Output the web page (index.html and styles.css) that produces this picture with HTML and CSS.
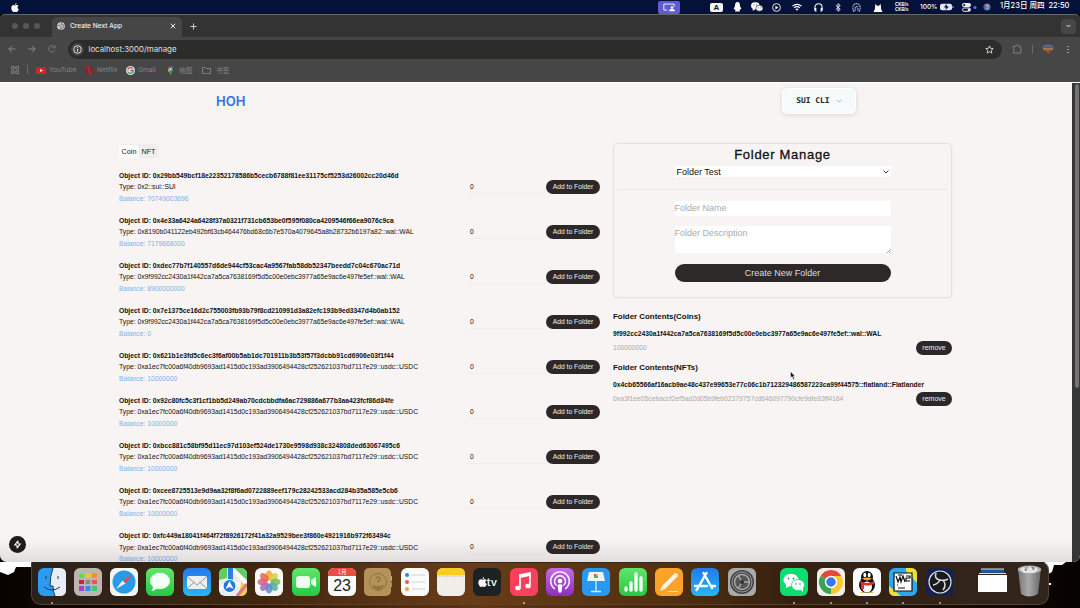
FILE: index.html
```html
<!DOCTYPE html>
<html lang="zh">
<head>
<meta charset="utf-8">
<title>Create Next App</title>
<link rel="stylesheet" href="styles.css">
</head>
<body>
<div class="desktop">
<header class="menubar">
  <svg class="apple" viewBox="0 0 16 18"><path fill="#fff" d="M11 0c0 2-1 4-3 4 0-2 1-3.500 3-4zM8 5c1 0 2-1 4-1 1 0 2.500.7 3 1.700-3 1.800-2.500 5.500.6 6.800C14.500 15.500 13 18 11.300 18c-1 0-1.600-.7-3-.7s-2 .7-3 .7C3 18 .5 13.500.5 10 .5 6 3 4 5 4c1.300 0 2 1 3 1z"/></svg>
  <div class="menu-right">
    <span class="share"><svg viewBox="0 0 14 10" width="12" height="9"><path d="M5 8H1V1h12v3" fill="none" stroke="#fff"/><circle cx="10.500" cy="5" r="1.500" fill="#fff"/><path d="M7 9.500c0-4 7-4 7 0z" fill="#fff"/></svg></span>
    <span class="ime">A</span>
    <svg class="m3" viewBox="0 0 10 12" width="9" height="10"><path fill="#fff" d="M5 0C2.500 0 2 2 2 5 .5 7 0 9 1 9l.8-.5L2.500 10 2 11.500h6L7.500 10l.8-1.500.7.5c1 0 .5-2-1-4 0-3-.5-5-3-5z"/></svg>
    <svg class="m4" viewBox="0 0 14 11" width="12" height="10"><ellipse cx="5" cy="4" rx="5" ry="4" fill="#fff"/><path d="M2 7v3l3-2" fill="#fff"/><ellipse cx="9.800" cy="7" rx="4.200" ry="3.500" fill="#fff" stroke="#061139" stroke-width=".7"/><path fill="#061139" d="M3 2.500h1v1H3zm3 0h1v1H6zM8 6h1v1H8zm3 0h1v1h-1z"/></svg>
    <svg class="m5" viewBox="0 0 12 12" width="9" height="9"><circle cx="6" cy="6" r="5.200" fill="none" stroke="#fff" stroke-width="1.200"/><path fill="#fff" d="M4.500 3.500 8.500 6l-4 2.500z"/></svg>
    <svg class="m6" viewBox="0 0 12 9" width="10" height="8"><path d="M.5 3.500Q6-1 11.500 3.500M2.500 5.500Q6 2.500 9.500 5.500" fill="none" stroke="#fff" stroke-width="1.400"/><path d="m6 9-2-2q2-1.500 4 0z" fill="#fff"/></svg>
    <svg class="m7" viewBox="0 0 10 10" width="9" height="9"><path d="M1 7V5c0-5.500 8-5.500 8 0v2" fill="none" stroke="#fff" stroke-width="1.200"/><path fill="#fff" d="M.4 5.500h2.200V10L.4 8.500zm7 0h2.200v3L7.400 10z"/></svg>
    <svg class="m8" viewBox="0 0 8 12" width="6" height="9"><path d="m1 3 6 5.500L4 11V1l3 2.500L1 9" fill="none" stroke="#fff" stroke-width="1.200"/></svg>
    <svg class="m9" viewBox="0 0 10 10" width="9" height="9"><path d="M2 10 1 6c-1-7 9-7 8 0l-1 4M3.500 9V5.500c0-2 3-2 3 0V9" fill="none" stroke="#abb3cb" stroke-width="1.300" stroke-dasharray="2 .6"/></svg>
    <svg class="m10" viewBox="0 0 10 10" width="10" height="9"><path fill="#fff" d="M2 1 4 3h2l2-2 .5 6L10 10H0l1.500-3z"/></svg>
    <span class="rate">CKB/s<br>CKB/s</span>
    <span class="pct">100%</span>
    <span class="battery"><svg viewBox="0 0 14 8" width="14" height="8"><rect y=".8" width="12" height="6.400" rx="2" fill="#e3e7f0"/><path d="M13 3v2" stroke="#bbc"/><path d="M6.500 1 4 4.500h2L5.500 7 9 3.500H7z" fill="#061139"/></svg></span>
    <svg class="m11" viewBox="0 0 15 9" width="15" height="9"><rect width="9" height="4" rx="2" fill="#eee"/><rect x=".5" y="5" width="8" height="3.300" rx="1.600" fill="none" stroke="#eee"/><circle cx="2.200" cy="2" r="1.100" fill="#061139"/><circle cx="7" cy="6.700" r="1.300" fill="#eee"/><circle cx="13" cy="4.500" r="1.500" fill="#7468ee"/></svg>
    <span class="siri"></span>
    <span class="clock">1月23日 周四&nbsp; 22:50</span>
  </div>
</header>

<main class="window">
  <div class="tabs">
    <div class="lights"><i></i><i></i><i></i></div>
    <div class="tab">
      <svg viewBox="0 0 10 10" width="8" height="8"><circle cx="5" cy="5" r="4.800" fill="#d2d2d2"/><path d="M1 4l2.500.5L5 6v2.500L3.500 9M6 1 5 3l2 1 2-.5M7 6l1.500.5L7 8" fill="none" stroke="#555" stroke-width="1.200"/></svg>
      <span>Create Next App</span>
      <svg class="close" viewBox="0 0 8 8" width="6" height="6"><path d="m1 1 6 6M7 1 1 7" stroke="#eee" stroke-width="1.300"/></svg>
    </div>
    <svg class="plus" viewBox="0 0 8 8" width="7" height="7"><path d="M4 .5v7M.5 4h7" stroke="#ddd"/></svg>
    <span class="tabmenu"><svg viewBox="0 0 6 4" width="5" height="4"><path d="m.7.7 2.300 2.300L5.300.7" fill="none" stroke="#eee" stroke-width="1.200"/></svg></span>
  </div>
  <div class="toolbar">
    <svg class="nav" viewBox="0 0 10 10"><path d="M9.500 5H1m4-4L1 5l4 4" fill="none" stroke="#999"/></svg>
    <svg class="nav" viewBox="0 0 10 10"><path d="M.5 5H9M5 1l4 4-4 4" fill="none" stroke="#999"/></svg>
    <svg class="nav" viewBox="0 0 10 10"><path d="M8.500 6.500A4 4 0 1 1 8 2.300M8.800.5v3H5.500" fill="none" stroke="#888"/></svg>
    <div class="omnibox">
      <span class="info"><svg viewBox="0 0 10 10" width="9" height="9"><circle cx="5" cy="5" r="4.200" fill="none" stroke="#eee"/><path d="M5 4.300v3M5 2.400v1" stroke="#eee" stroke-width="1.100"/></svg></span>
      <span class="url">localhost:3000/manage</span>
      <svg class="star" viewBox="0 0 10 10" width="9" height="9"><path d="m5 1 1.200 2.700 2.900.3L7 6l.6 3L5 7.500 2.400 9 3 6 .9 4l2.900-.3z" fill="none" stroke="#eee" stroke-width=".9"/></svg>
    </div>
    <svg class="puzzle" viewBox="0 0 11 11" width="10" height="10"><path d="M1.500 2.500h2.800c-.3-2 2.700-2 2.400 0h2.800v2.800c1.500 0 1.500 2.400 0 2.400v2.300h-8V7.700c1.500 0 1.500-2.400 0-2.400z" fill="none" stroke="#858585"/></svg>
    <i class="bar"></i>
    <svg class="avatar" viewBox="0 0 12 10" width="12" height="10"><path d="M1 2q5-3 10 0v4l-2 1-1 2-3-1-4-2z" fill="#7e5047"/><path d="M1 3q5-3 10 0" stroke="#536c9a" stroke-width="2" fill="none"/><path d="M1 5h10" stroke="#c19a50"/><path d="m4 6 3 3" stroke="#b54432" stroke-width="2"/></svg>
    <i class="dots"></i>
  </div>
  <div class="bookmarks">
    <svg class="apps" viewBox="0 0 9 9" width="8" height="8"><path d="M.5.500h3v3h-3zM5.500.500h3v3h-3zM.5 5.500h3v3h-3zM5.500 5.500h3v3h-3z" fill="none" stroke="#888"/></svg>
    <i class="bar b1"></i>
    <span class="bm bm1"><svg viewBox="0 0 10 7" width="10" height="7"><rect width="10" height="7" rx="1.500" fill="#d9222d"/><path d="m4 2 3 1.500L4 5z" fill="#fff"/></svg>YouTube</span>
    <span class="bm bm2"><svg viewBox="0 0 7 9" width="7" height="9"><path d="M0 0h2v9H0zM4.500 0h2v9h-2z" fill="#8c2020"/><path d="M0 0h2.400l4.100 9H4z" fill="#ad2a2a"/></svg>Netflix</span>
    <span class="bm bm3"><svg viewBox="0 0 10 10" width="9" height="9"><circle cx="5" cy="5" r="5" fill="#ddd"/><path d="M7.300 2.800A3.200 3.200 0 0 0 2 4" fill="none" stroke="#d94e42" stroke-width="1.400"/><path d="M2 4q-.6 1.500.4 3" fill="none" stroke="#e1b532" stroke-width="1.400"/><path d="M2.400 7q2 2 4.200.6" fill="none" stroke="#459c56" stroke-width="1.400"/><path d="M6.600 7.600Q8 6.700 8 5H5" fill="none" stroke="#4378ce" stroke-width="1.400"/></svg>Gmail</span>
    <span class="bm bm4"><svg viewBox="0 0 8 10" width="7" height="9"><path d="M4 10C3 7 1 6 1 3.500L4 4l3-1c0 3-2 4-3 7z" fill="#36a455"/><path d="M1 3.500Q1 0 4 0v4z" fill="#d84c42"/><path d="M4 0q3 0 3 3.500L4 4z" fill="#4781d6"/><path d="m1 4 3-1-2 4z" fill="#e1b13c"/><circle cx="4" cy="3.500" r="1" fill="#fff"/></svg>地图</span>
    <span class="bm bm5"><svg viewBox="0 0 10 8" width="9" height="7"><path d="M.5.500h3l1 1.200h5v5.800h-9z" fill="none" stroke="#888"/></svg>书签</span>
  </div>

  <div class="viewport">
    <nav class="site-nav">
      <span class="brand">HOH</span>
      <button class="wallet">SUI CLI <svg viewBox="0 0 6 4" width="6" height="4"><path d="m.5.700 2.500 2.500L5.500.7" fill="none" stroke="#9aa" stroke-width=".8"/></svg></button>
    </nav>
    <div class="content">
      <section class="assets">
        <div class="switch"><span class="on">Coin</span><span>NFT</span></div>
        <div class="coin"><div class="desc"><b>Object ID: 0x29bb549bcf18e22352178586b5cecb6788f81ee31175cf5253d26002cc20d46d</b><p>Type: 0x2::sui::SUI</p><em>Balance: 70749003696</em></div><span class="amount">0</span><button>Add to Folder</button></div>
        <div class="coin"><div class="desc"><b>Object ID: 0x4e33a6424a6428f37a0321f731cb653be0f595f080ca4209546f66ea9076c9ca</b><p>Type: 0x8190b041122eb492bf63cb464476bd68c6b7e570a4079645a8b28732b6197a82::wal::WAL</p><em>Balance: 7179668000</em></div><span class="amount">0</span><button>Add to Folder</button></div>
        <div class="coin"><div class="desc"><b>Object ID: 0xdec77b7f140557d6de944cf53cac4a9567fab58db52347beedd7c04c670ac71d</b><p>Type: 0x9f992cc2430a1f442ca7a5ca7638169f5d5c00e0ebc3977a65e9ac6e497fe5ef::wal::WAL</p><em>Balance: 8900000000</em></div><span class="amount">0</span><button>Add to Folder</button></div>
        <div class="coin"><div class="desc"><b>Object ID: 0x7e1375ce16d2c755003fb93b79f8cd210991d3a82efc193b9ed3347d4b0ab152</b><p>Type: 0x9f992cc2430a1f442ca7a5ca7638169f5d5c00e0ebc3977a65e9ac6e497fe5ef::wal::WAL</p><em>Balance: 0</em></div><span class="amount">0</span><button>Add to Folder</button></div>
        <div class="coin"><div class="desc"><b>Object ID: 0x621b1e3fd5c6ec3f6af00b5ab1dc701911b3b53f57f3dcbb91cd6906e03f1f44</b><p>Type: 0xa1ec7fc00a6f40db9693ad1415d0c193ad3906494428cf252621037bd7117e29::usdc::USDC</p><em>Balance: 10000000</em></div><span class="amount">0</span><button>Add to Folder</button></div>
        <div class="coin"><div class="desc"><b>Object ID: 0x92c80fc5c3f1cf1bb5d249ab70cdcbbdfa6ac729886a677b3aa423fcf86d84fe</b><p>Type: 0xa1ec7fc00a6f40db9693ad1415d0c193ad3906494428cf252621037bd7117e29::usdc::USDC</p><em>Balance: 10000000</em></div><span class="amount">0</span><button>Add to Folder</button></div>
        <div class="coin"><div class="desc"><b>Object ID: 0xbcc881c58bf95d11ec97d103ef524de1730e9598d938c324808ded63067495c6</b><p>Type: 0xa1ec7fc00a6f40db9693ad1415d0c193ad3906494428cf252621037bd7117e29::usdc::USDC</p><em>Balance: 10000000</em></div><span class="amount">0</span><button>Add to Folder</button></div>
        <div class="coin"><div class="desc"><b>Object ID: 0xcee8725513e9d9aa32f8f6ad0722889eef179c28242533acd284b35a585e5cb6</b><p>Type: 0xa1ec7fc00a6f40db9693ad1415d0c193ad3906494428cf252621037bd7117e29::usdc::USDC</p><em>Balance: 10000000</em></div><span class="amount">0</span><button>Add to Folder</button></div>
        <div class="coin"><div class="desc"><b>Object ID: 0xfc449a18041f464f72f8926172f41a32a9529bee3f860e4921916b972f63494c</b><p>Type: 0xa1ec7fc00a6f40db9693ad1415d0c193ad3906494428cf252621037bd7117e29::usdc::USDC</p><em>Balance: 10000000</em></div><span class="amount">0</span><button>Add to Folder</button></div>
      </section>
      <aside class="folders">
        <div class="card">
          <h2>Folder Manage</h2>
          <div class="select">Folder Test<svg viewBox="0 0 6 4" width="6" height="4"><path d="m.5.500 2.500 2.500L5.500.5" fill="none" stroke="#222" stroke-width=".9"/></svg></div>
          <hr>
          <div class="field">Folder Name</div>
          <div class="field area">Folder Description<svg viewBox="0 0 5 5" width="4" height="4"><path d="M0 5 5 0M3 5l2-2" stroke="#555" stroke-width=".7"/></svg></div>
          <button class="create">Create New Folder</button>
        </div>
        <h3>Folder Contents(Coins)</h3>
        <div class="entry"><b>9f992cc2430a1f442ca7a5ca7638169f5d5c00e0ebc3977a65e9ac6e497fe5ef::wal::WAL</b><div><span>100000000</span><button>remove</button></div></div>
        <h3 class="second">Folder Contents(NFTs)</h3>
        <div class="entry"><b>0x4cb65566af16acb9ae48c437e99653e77c06c1b712329486587223ca99f44575::flatland::Flatlander</b><div><span>0xa3f1ee05cebaccf2ef5ad2d05b9feb02379757cd646097790cfe9dfe83ff4164</span><button>remove</button></div></div>
      </aside>
    </div>
    <div class="scroll"><i></i></div>
    <span class="next-badge"><svg viewBox="0 0 10 10" width="9" height="9"><path d="M5.500.8 2 5.500h2.500M4.500 9.200 8 4.500H5.500M5.500.8v3.700M4.500 5.500v3.700" fill="none" stroke="#fff" stroke-width="1.200"/></svg></span>
  </div>
</main>
<svg class="cursor" viewBox="0 0 6 9" width="6" height="9"><path d="M.5.500v6.500L2 5.600l1.300 2.900 1.200-.5-1.300-2.800h2z" fill="#111" stroke="#fff" stroke-width=".5"/></svg>

<svg class="corners" viewBox="0 0 1080 46" width="1080" height="46"><path d="M0 0h40v5H16l-2 5-6 3-8-3zM1046 0h34l-14 0-4 3h-8l-2 7-6 3-10-2-6-6z" fill="#fff"/><path d="M1049 21h2v2h-2z" fill="#fff"/></svg>

<footer class="dock">
  <span class="app run"><svg viewBox="0 0 28 28"><rect width="28" height="28" rx="6" fill="#299cf2"/><path d="M15 0h7q6 0 6 6v16q0 6-6 6h-5q-2-5-2-10h-3Q12 8 15 0z" fill="#e8eef5"/><path d="M8 8v3M20 8v3M6 19q8 6 16 0M15 0q-3 8-3 18h3q0 5 2 10" fill="none" stroke="#243955"/></svg></span>
  <span class="app"><svg viewBox="0 0 28 28"><rect width="28" height="28" rx="6" fill="#bcb5b2"/><g><path fill="#5dda50" d="M5 6h5v4H5z"/><path fill="#f1c329" d="M11.500 5h5v5h-5z"/><path fill="#f59226" d="M18 5h5v5h-5z"/><path fill="#c62932" d="M5 12h5v4H5z"/><path fill="#8a8a8a" d="M11.500 12h5v4h-5z"/><path fill="#f34d62" d="M18 12h5v4h-5z"/><path fill="#9a43d7" d="M5 18h5v5H5z"/><path fill="#338bec" d="M11.500 18h5v5h-5z"/><path fill="#40c969" d="M18 18h5v5h-5z"/></g></svg></span>
  <span class="app"><svg viewBox="0 0 28 28"><rect width="28" height="28" rx="6" fill="#f4f5f6"/><circle cx="14" cy="14" r="11.500" fill="#279be7"/><path d="m22 7-6.500 8.500-3-3z" fill="#ef493d"/><path d="m6 21 6.500-8.500 3 3z" fill="#eee"/></svg></span>
  <span class="app"><svg viewBox="0 0 28 28"><rect width="28" height="28" rx="6" fill="url(#green)"/><ellipse cx="14" cy="13" rx="10" ry="8.300" fill="#f4fff4"/><path d="M7 18q0 4-2 5 4 0 6-3" fill="#f4fff4"/></svg></span>
  <span class="app"><svg viewBox="0 0 28 28"><rect width="28" height="28" rx="6" fill="url(#blue)"/><rect x="4" y="8" width="20" height="13" rx="2" fill="#eee"/><path d="m4.500 9 9.500 8 9.500-8M4.500 20l7-6M23.500 20l-7-6" fill="none" stroke="#999"/></svg></span>
  <span class="app maps"><svg viewBox="0 0 28 28"><rect width="28" height="28" fill="#e9eeea"/><path d="M0 0h8v10L0 12zM15 0h13v12z" fill="#62cb62"/><path d="M9 0h5v17H9z" fill="#2d80dc"/><path d="m15 2 13 14M0 22Q13 8 28 22" stroke="#fff" stroke-width="3" fill="none"/><path d="M22 14 28 18v10h-8z" fill="#f5cd43"/><path d="M18 28 28 16" stroke="#d4739e" stroke-width="3"/><circle cx="10.500" cy="18" r="6.500" fill="#247ae0" stroke="#fff"/><path d="m10.500 13 4 8-4-2-4 2z" fill="#fff"/></svg></span>
  <span class="app"><svg viewBox="0 0 28 28"><rect width="28" height="28" rx="6" fill="#f8f8f8"/><g fill-opacity=".85"><ellipse cx="14" cy="7.500" rx="3.500" ry="5" fill="#f6a62f"/><ellipse cx="14" cy="7.500" rx="3.500" ry="5" fill="#d8cf3b" transform="rotate(45 14 14)"/><ellipse cx="14" cy="7.500" rx="3.500" ry="5" fill="#78bd55" transform="rotate(90 14 14)"/><ellipse cx="14" cy="7.500" rx="3.500" ry="5" fill="#58aaa5" transform="rotate(135 14 14)"/><ellipse cx="14" cy="7.500" rx="3.500" ry="5" fill="#598bd5" transform="rotate(180 14 14)"/><ellipse cx="14" cy="7.500" rx="3.500" ry="5" fill="#9471bd" transform="rotate(225 14 14)"/><ellipse cx="14" cy="7.500" rx="3.500" ry="5" fill="#d36296" transform="rotate(270 14 14)"/><ellipse cx="14" cy="7.500" rx="3.500" ry="5" fill="#e96448" transform="rotate(315 14 14)"/></g></svg></span>
  <span class="app"><svg viewBox="0 0 28 28"><rect width="28" height="28" rx="6" fill="url(#green)"/><rect x="4" y="8" width="14" height="12" rx="3" fill="#effff0"/><path d="m19 12 5-3v10l-5-3z" fill="#effff0"/></svg></span>
  <span class="app calendar"><small>1月</small><strong>23</strong></span>
  <span class="app"><svg viewBox="0 0 28 28"><rect width="27" height="28" rx="5" fill="#b4925a"/><path d="M27.500 8v5" stroke="#d2ab55"/><path d="M27.500 14v5" stroke="#4da991"/><circle cx="14" cy="14" r="8.500" fill="none" stroke="#94733e"/><path d="M8 17q6 2 12 0-2 5-6 5t-6-5z" fill="#94733e"/><path d="M12 11q0-2 2-2t2 2-2 2v2" fill="none" stroke="#94733e" stroke-width="1.300"/></svg></span>
  <span class="app"><svg viewBox="0 0 28 28"><rect width="28" height="28" rx="6" fill="#fbfbfb"/><circle cx="6" cy="7" r="2" fill="#2f82ed"/><circle cx="6" cy="14" r="2" fill="#e85959"/><circle cx="6" cy="21" r="2" fill="#efa340"/><path d="M11 7h13M11 14h13M11 21h13" stroke="#c9c9c9" stroke-width=".8"/></svg></span>
  <span class="app"><svg viewBox="0 0 28 28"><rect width="28" height="28" rx="6" fill="#f1eeea"/><path d="M0 7V6q0-6 6-6h16q6 0 6 6v1z" fill="#f8cc24"/><path d="M0 8h28" stroke="#bcae8f" stroke-dasharray="1 1"/></svg></span>
  <span class="app tv"><svg viewBox="0 0 16 18"><path fill="#fff" d="M11 0c0 2-1 4-3 4 0-2 1-3.500 3-4zM8 5c1 0 2-1 4-1 1 0 2.500.7 3 1.700-3 1.800-2.500 5.500.6 6.800C14.500 15.500 13 18 11.300 18c-1 0-1.600-.7-3-.7s-2 .7-3 .7C3 18 .5 13.500.5 10 .5 6 3 4 5 4c1.300 0 2 1 3 1z"/></svg>tv</span>
  <span class="app run gold"><svg viewBox="0 0 28 28"><rect width="28" height="28" rx="6" fill="#fa405b"/><path d="M10 19V7l10-2v12" fill="none" stroke="#fff" stroke-width="1.700"/><path d="m10 7 10-2v3l-10 2z" fill="#fff"/><ellipse cx="8" cy="20" rx="2.800" ry="2.300" fill="#fff"/><ellipse cx="18" cy="18" rx="2.800" ry="2.300" fill="#fff"/></svg></span>
  <span class="app"><svg viewBox="0 0 28 28"><rect width="28" height="28" rx="6" fill="url(#purple)"/><g fill="none" stroke="#fff" stroke-width="1.400"><path d="M9 21a9.300 9.300 0 1 1 10 0"/><path d="M10.500 17.500a5.500 5.500 0 1 1 7 0"/></g><circle cx="14" cy="13" r="2.300" fill="#fff"/><path d="M11.500 17q2.500-1.500 5 0l-1 7q-1.500 1.500-3 0z" fill="#fff"/></svg></span>
  <span class="app"><svg viewBox="0 0 28 28"><rect width="28" height="28" rx="6" fill="#2699f5"/><path d="M7 4h14l2 9H5z" fill="#eef5fb"/><path d="M14 13v10M9 23.500h10" stroke="#dceaf7" stroke-width="1.300"/><path d="M12 6h2v2h-2z" fill="#df5550"/><path d="M14 6h2v2h-2z" fill="#e8b34b"/><path d="M12 8h4v2h-4z" fill="#4bb668"/></svg></span>
  <span class="app"><svg viewBox="0 0 28 28"><rect width="28" height="28" rx="6" fill="url(#green)"/><path d="M7 22v-2M12 22v-7M17 22V6M22 22V10" stroke="#fff" stroke-width="3.300" stroke-linecap="round"/></svg></span>
  <span class="app"><svg viewBox="0 0 28 28"><rect width="28" height="28" rx="6" fill="#fba328"/><path d="m5 23 2-5L20 5q3 0 3 3L10 21z" fill="#f8f1e8"/><path d="M12 23.500h11" stroke="#fbdcab"/></svg></span>
  <span class="app"><svg viewBox="0 0 28 28"><rect width="28" height="28" rx="6" fill="url(#blue)"/><path d="M15.500 5 8 18M12.500 5 21 20M4 18h12M20 18h4M7 20l-1.500 2" stroke="#fff" stroke-width="2.400" stroke-linecap="round"/></svg></span>
  <span class="app"><svg viewBox="0 0 28 28"><rect width="28" height="28" rx="6" fill="#aaa"/><circle cx="14" cy="14" r="12" fill="#444"/><circle cx="14" cy="14" r="10" fill="none" stroke="#999" stroke-width="1"/><circle cx="14" cy="14" r="7.500" fill="#555" stroke="#aaa" stroke-width="1.500"/><path d="m14 14-4-7M14 14h8M14 14l-4 7" stroke="#aaa" stroke-width="1.500"/><circle cx="14" cy="14" r="2" fill="#333"/></svg></span>
  <i class="sep"></i>
  <span class="app run"><svg viewBox="0 0 28 28"><rect width="28" height="28" rx="6" fill="#0ddd71"/><ellipse cx="11" cy="12" rx="7.500" ry="6.300" fill="#fff"/><path d="M6 16v4l4-2" fill="#fff"/><ellipse cx="18" cy="17" rx="6.500" ry="5.500" fill="#fff" stroke="#0ddd71" stroke-width=".8"/><path d="m20 21 3 3v-4" fill="#fff"/><g fill="#169953"><circle cx="8.500" cy="10.500" r=".9"/><circle cx="13.500" cy="10.500" r=".9"/><circle cx="16" cy="16" r=".8"/><circle cx="20" cy="16" r=".8"/></g></svg></span>
  <span class="app run"><svg viewBox="0 0 28 28"><rect width="28" height="28" rx="6" fill="#f1eeec"/><path d="M14 14 3.600 8A12 12 0 0 1 24.400 8z" fill="#e94939"/><path d="m14 14 10.400-6A12 12 0 0 1 14 26z" fill="#f9c934"/><path d="M14 14v12A12 12 0 0 1 3.600 8z" fill="#38a556"/><path d="M14 8h10.400L20 16z" fill="#f9c934"/><circle cx="14" cy="14" r="5.500" fill="#3879e9" stroke="#fff" stroke-width="1.500"/></svg></span>
  <span class="app run"><svg viewBox="0 0 28 28"><rect width="28" height="28" rx="6" fill="#fff"/><ellipse cx="14" cy="17" rx="8" ry="8" fill="#111"/><circle cx="14" cy="9" r="6" fill="#111"/><ellipse cx="14" cy="19" rx="5" ry="5.500" fill="#fff"/><ellipse cx="11.800" cy="7" rx="1.500" ry="2.200" fill="#fff"/><ellipse cx="16.200" cy="7" rx="1.500" ry="2.200" fill="#fff"/><path d="M9 10.500q5-2 10 0-5 4-10 0zM7 25q2-2 6 0zM15 25q4-2 6 0z" fill="#f4a42d"/><path d="M7 13q7 4 14 0v3q-6 3-10 1v4H8v-5z" fill="#e32e36"/></svg></span>
  <span class="app run"><svg viewBox="0 0 28 28"><rect width="28" height="28" rx="6" fill="#29a9f2"/><path d="M17 0h5q6 0 6 6v9L17 3zM0 18l12 10H6q-6 0-6-6z" fill="#efdf35"/><path d="M5 5h18v18H5z" fill="#fff"/><path d="M5 5h18v18H5zM7 8l2 6 2-5 1 5 2-6 2 6M8 17h1m0 3h7M17 8h4v2h-4v3h4M9 7h4" fill="none" stroke="#111" stroke-width="1.200"/></svg></span>
  <span class="app run"><svg viewBox="0 0 28 28"><rect width="28" height="28" rx="6" fill="#16224b"/><circle cx="14" cy="14" r="11" fill="#17191e" stroke="#ddd" stroke-width="1.200"/><path d="M10 5q-2 6 4 7 5 1 8-1M14 12q-2 4-7 5M17 12q4 5 0 10" fill="none" stroke="#d9d9d9" stroke-width="1.600"/></svg></span>
  <i class="sep light"></i>
  <span class="stack"><svg viewBox="0 0 29 24" width="29" height="24"><path d="M3 1h23v5H3z" fill="#245697"/><path d="M3 1h23" stroke="#ddd"/><path d="M1 5h27v1H1z" fill="#ddd"/><path d="M0 7h29v17H0z" fill="#fff"/></svg></span>
  <span class="trash"><svg viewBox="0 0 25 32" width="25" height="32"><defs><linearGradient id="can"><stop stop-color="#767676"/><stop offset=".45" stop-color="#aaa"/><stop offset="1" stop-color="#666"/></linearGradient></defs><path d="m1 4 3 25q8 5 17 0l3-25z" fill="url(#can)"/><ellipse cx="12.500" cy="4.500" rx="11.800" ry="4" fill="#b4b4b4"/><path d="m3 4 4-2 2 4 4-5 3 4 3-3 2 3-4 3H7z" fill="#e5e5e5"/><path d="m8 4 1 2m6-4 2 3" stroke="#605570"/></svg></span>
  <svg width="0" height="0"><defs><linearGradient id="green" x2="0" y2="1"><stop stop-color="#62e66b"/><stop offset="1" stop-color="#25c944"/></linearGradient><linearGradient id="blue" x2="0" y2="1"><stop stop-color="#2478e9"/><stop offset="1" stop-color="#25b8f7"/></linearGradient><linearGradient id="purple" x2="0" y2="1"><stop stop-color="#c66be7"/><stop offset="1" stop-color="#8c2fc1"/></linearGradient></defs></svg>
</footer>
</div>
</body>
</html>
```

FILE: styles.css
```css
* { box-sizing: border-box; }
body { margin: 0; font-family: "Liberation Sans", "Noto Sans CJK SC", sans-serif; }
b, em, p, h2, h3 { margin: 0; font-style: normal; white-space: nowrap; }
button { border: 0; font-family: inherit; padding: 0; white-space: nowrap; }
svg { flex: none; display: block; }
.desktop { position: relative; width: 1080px; height: 608px; overflow: hidden; background: linear-gradient(90deg, #080300, #170a02 12%, #613511 45%, #241305 80%, #050200); }

.menubar { height: 14px; background: #041139; color: #fff; display: flex; align-items: center; justify-content: space-between; padding: 0 11px; }
.apple { width: 8px; height: 9px; }
.menu-right { display: flex; align-items: center; height: 14px; }
.share { width: 22px; height: 13px; background: #615bd2; border-radius: 2px; display: grid; place-items: center; }
.ime { width: 13px; height: 9px; margin-left: 30px; background: #f4f5f8; color: #111; border-radius: 2px; font: bold 8px/9px "Liberation Sans", sans-serif; text-align: center; }
.m3 { margin-left: 10px; } .m4 { margin-left: 9px; } .m5 { margin-left: 9px; } .m6 { margin-left: 11px; } .m7 { margin-left: 12px; } .m8 { margin-left: 12px; } .m9 { margin-left: 11px; } .m10 { margin-left: 12px; }
.rate { font: bold 4.500px/5px "Liberation Sans", sans-serif; width: 16px; margin-left: 12px; }
.pct { font: 500 6.500px Inter, sans-serif; width: 19px; margin-left: 9px; }
.battery { margin-left: 1px; }
.m11 { margin-left: 8px; }
.siri { width: 8px; height: 8px; border-radius: 50%; margin-left: 6px; background: conic-gradient(#ef8bbf, #5684da, #35cbd2, #7b468c, #ef8bbf); border: 1px solid #40455f; }
.clock { margin-left: 9px; width: 69px; height: 14px; font: 500 7.500px/12px "Inter", "Noto Sans CJK SC", sans-serif; white-space: nowrap; }

.window { width: 1080px; height: 548px; background: #464646; display: flex; flex-direction: column; border-top: 1px solid #686868; border-radius: 5px 5px 7px 7px; overflow: hidden; }
.tabs { height: 22px; background: #333; display: flex; align-items: center; flex: none; }
.lights { width: 52px; display: flex; gap: 5px; padding-left: 12px; }
.lights i { width: 6px; height: 6px; border-radius: 50%; background: #5a5656; }
.tab { width: 130px; height: 20px; margin-top: 2px; padding: 0 6px 3px 5px; border-radius: 5px 5px 0 0; background: #464646; color: #eee; display: flex; align-items: center; gap: 5px; font: 500 6.600px Inter, sans-serif; }
.tab .close { margin-left: auto; }
.plus { margin-left: 8px; }
.tabmenu { width: 15px; height: 15px; background: #464646; border-radius: 4px; margin: 0 4px 0 auto; display: grid; place-items: center; }
.toolbar { height: 24px; display: flex; align-items: center; padding-left: 8px; flex: none; }
.nav { width: 8px; height: 8px; margin-right: 12px; }
.omnibox { width: 934px; height: 19px; border-radius: 10px; background: #2c2c2b; display: flex; align-items: center; padding: 0 8px 0 3px; }
.info { width: 13px; height: 13px; background: #444; border-radius: 50%; display: grid; place-items: center; }
.url { font: 7.850px Inter, sans-serif; margin-left: 4.500px; color: #e0e0e0; }
.star { margin-left: auto; }
.puzzle { margin-left: 10px; }
.bar { width: 1px; height: 9px; background: #686868; margin-left: 10px; }
.avatar { margin-left: 9px; }
.dots { width: 2px; height: 9px; margin-left: 13px; background: radial-gradient(circle, #999 1px, transparent 1px) 0 0 / 2px 3px; }
.bookmarks { height: 21px; display: flex; align-items: flex-start; padding: 4px 0 0 11px; color: #858585; flex: none; font: 6.700px Inter, "Noto Sans CJK SC", sans-serif; }
.apps { margin-top: 1px; }
.bar.b1 { margin-left: 8px; }
.bm { display: flex; align-items: center; height: 10px; white-space: nowrap; }
.bm svg { margin-right: 3px; }
.bm1 { width: 50px; margin-left: 8px; } .bm2 { width: 40px; } .bm2 svg { margin-right: 4px; } .bm3 { width: 41px; } .bm4 { width: 35px; } .bm4 svg { margin-right: 5px; } .bm5 svg { margin-right: 5px; }

.viewport { position: relative; flex: 1; background: #f8f4f3; min-height: 0; border-top: 1px solid #fff; overflow: hidden; }
.viewport::after { content: ""; position: absolute; inset: auto 8px 0 0; height: 22px; background: linear-gradient(#0000, #00000018); }
.site-nav { height: 60px; padding-left: 216px; display: flex; align-items: flex-start; }
.brand { width: 566px; padding-top: 10px; font: 600 13px/16px Inter, sans-serif; color: #3370dd; }
.wallet { width: 74px; height: 26px; margin-top: 5px; padding-bottom: 1px; border-radius: 5px; background: #f5fafb; box-shadow: 0 1px 5px #0002; border: 1px solid #fff; display: flex; align-items: center; justify-content: center; gap: 6px; color: #222; font: bold 7.900px "DejaVu Sans Mono", monospace; }
.content { display: flex; padding-left: 119px; gap: 13px; }
.assets { width: 481px; }
.switch { display: flex; width: 39px; height: 14px; margin-top: 1px; border-radius: 4px; background: #f0edec; font-size: 7.200px; line-height: 13px; align-items: center; color: #222; }
.switch span { width: 19px; text-align: center; border-radius: 3px; }
.switch .on { background: #fff; width: 20px; }
.coin { height: 45.040px; display: flex; align-items: flex-start; color: #111; font-size: 6.760px; line-height: 11.260px; }
.coin:nth-child(2) { margin-top: 12px; }
.desc { width: 347px; }
.desc b, .desc p, .desc em { display: block; }
.desc em { color: #7db2eb; }
.amount { width: 80px; height: 14px; margin-top: 10px; padding-left: 4px; line-height: 14px; border-bottom: 1px solid #f1edec; border-radius: 3px; }
.coin button { width: 54px; height: 14px; border-radius: 7px; margin-top: 10px; background: #2c2828; color: #eee; font-size: 6.760px; line-height: 14px; }
.folders { width: 339px; color: #111; }
.card { height: 155px; border: 1px solid #e4e1e0; border-radius: 5px; box-shadow: 0 0 2px #0001; padding: 3px 4px; display: flex; flex-direction: column; align-items: center; }
h2 { font: 400 13px/16px "Liberation Sans", sans-serif; letter-spacing: .7px; -webkit-text-stroke: .3px #111; }
.select { width: 216px; height: 11px; margin-top: 3px; background: #fff; display: flex; align-items: center; justify-content: space-between; font-size: 9px; padding: 0 2px; }
.card hr { width: 100%; border: 0; height: 1px; background: #ebe7e6; margin: 12px 0 11px; }
.field { width: 216px; height: 15px; background: #fff; color: #aaa; font-size: 9px; line-height: 14px; flex: none; }
.area { height: 27px; margin-top: 10px; display: flex; justify-content: space-between; align-items: flex-start; }
.area svg { align-self: flex-end; }
.create { width: 216px; height: 18px; flex: none; margin-top: 11px; background: #2c2928; color: #ddd; border-radius: 9px; font-size: 9px; }
h3 { font: bold 7.900px/10px "Liberation Sans", sans-serif; margin-top: 13.500px; }
h3.second { margin-top: 8px; }
.entry { margin-top: 7px; font-size: 6.760px; }
.entry b { display: block; line-height: 10px; }
.entry div { display: flex; justify-content: space-between; align-items: center; margin-top: 2px; height: 14px; color: #aaa; }
.entry button { width: 36px; height: 14px; border-radius: 7px; background: #2c2828; color: #eee; font-size: 7px; }
.scroll { position: absolute; top: 0; right: 0; bottom: 0; width: 8px; background: #363636; padding: 1px 1px 0 3px; z-index: 2; }
.scroll i { display: block; height: 304px; border-radius: 3px; background: #747272; }
.next-badge { position: absolute; left: 9px; bottom: 9px; width: 17px; height: 17px; border-radius: 50%; background: #1c1c1c; display: grid; place-items: center; z-index: 2; }
.cursor { position: absolute; left: 790px; top: 371px; }
.corners { position: absolute; left: 0; top: 562px; }

.dock { position: absolute; left: 31px; top: 562px; width: 1018px; height: 43px; border-radius: 0 8px 10px 10px; border: 1px solid #5b412b; border-top-color: #302822; background: linear-gradient(90deg, #29211b, #40260f 22%, #693c19 43%, #52300f 62%, #352010 75%, #30251d); display: flex; align-items: flex-start; padding: 5px 0 0 5.500px; gap: 8.330px; }
.app { position: relative; width: 28px; height: 28px; flex: none; border-radius: 6px; }
.app > svg { width: 28px; height: 28px; }
.maps { overflow: hidden; }
.run::after { content: ""; position: absolute; left: 13px; top: 34px; width: 2px; height: 2px; border-radius: 50%; background: #bbb2a5; }
.gold::after { background: #f0c070; }
.calendar { background: #fafafa; overflow: hidden; text-align: center; color: #222; }
.calendar small { display: block; height: 8px; background: #eb4b45; color: #fff; font: 5.500px/8px "Noto Sans CJK SC", sans-serif; }
.calendar strong { display: block; font: 300 16px/19px "Liberation Sans", sans-serif; }
.tv { background: #1c2224; color: #fff; display: flex; align-items: center; justify-content: center; font: 500 11px Inter, sans-serif; }
.tv > svg { width: 9px; height: 10px; }
.sep { width: 1px; height: 32px; background: #5b4a3b; margin: 0 4px; }
.sep.light { background: #6e675f; }
.stack { width: 29px; }
.trash { width: 25px; margin: -3px 0 0 1px; }
```
